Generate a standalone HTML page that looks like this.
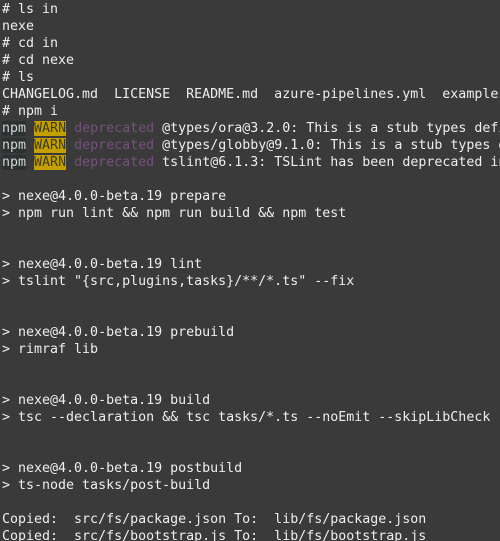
<!DOCTYPE html>
<html><head><style>
html,body{margin:0;padding:0;background:#3a3a3a;width:500px;height:541px;overflow:hidden}
pre{margin:0;padding:1px 0 0 2px;font-family:"DejaVu Sans Mono","Liberation Mono",monospace;font-size:13.3px;line-height:17px;color:#eeeeec;white-space:pre;overflow:hidden}
.n{background:#2c3133;color:#d3d7cf}
.w{background:#c4a000;color:#3a3a2a}
.d{color:#75507b}
</style></head><body><pre># ls in
nexe
# cd in
# cd nexe
# ls
CHANGELOG.md  LICENSE  README.md  azure-pipelines.yml  examples
# npm i
<span class="n">npm</span> <span class="w">WARN</span> <span class="d">deprecated</span> @types/ora@3.2.0: This is a stub types definition
<span class="n">npm</span> <span class="w">WARN</span> <span class="d">deprecated</span> @types/globby@9.1.0: This is a stub types defin
<span class="n">npm</span> <span class="w">WARN</span> <span class="d">deprecated</span> tslint@6.1.3: TSLint has been deprecated in

&gt; nexe@4.0.0-beta.19 prepare
&gt; npm run lint &amp;&amp; npm run build &amp;&amp; npm test


&gt; nexe@4.0.0-beta.19 lint
&gt; tslint "{src,plugins,tasks}/**/*.ts" --fix


&gt; nexe@4.0.0-beta.19 prebuild
&gt; rimraf lib


&gt; nexe@4.0.0-beta.19 build
&gt; tsc --declaration &amp;&amp; tsc tasks/*.ts --noEmit --skipLibCheck


&gt; nexe@4.0.0-beta.19 postbuild
&gt; ts-node tasks/post-build

Copied:  src/fs/package.json To:  lib/fs/package.json
Copied:  src/fs/bootstrap.js To:  lib/fs/bootstrap.js
</pre></body></html>
